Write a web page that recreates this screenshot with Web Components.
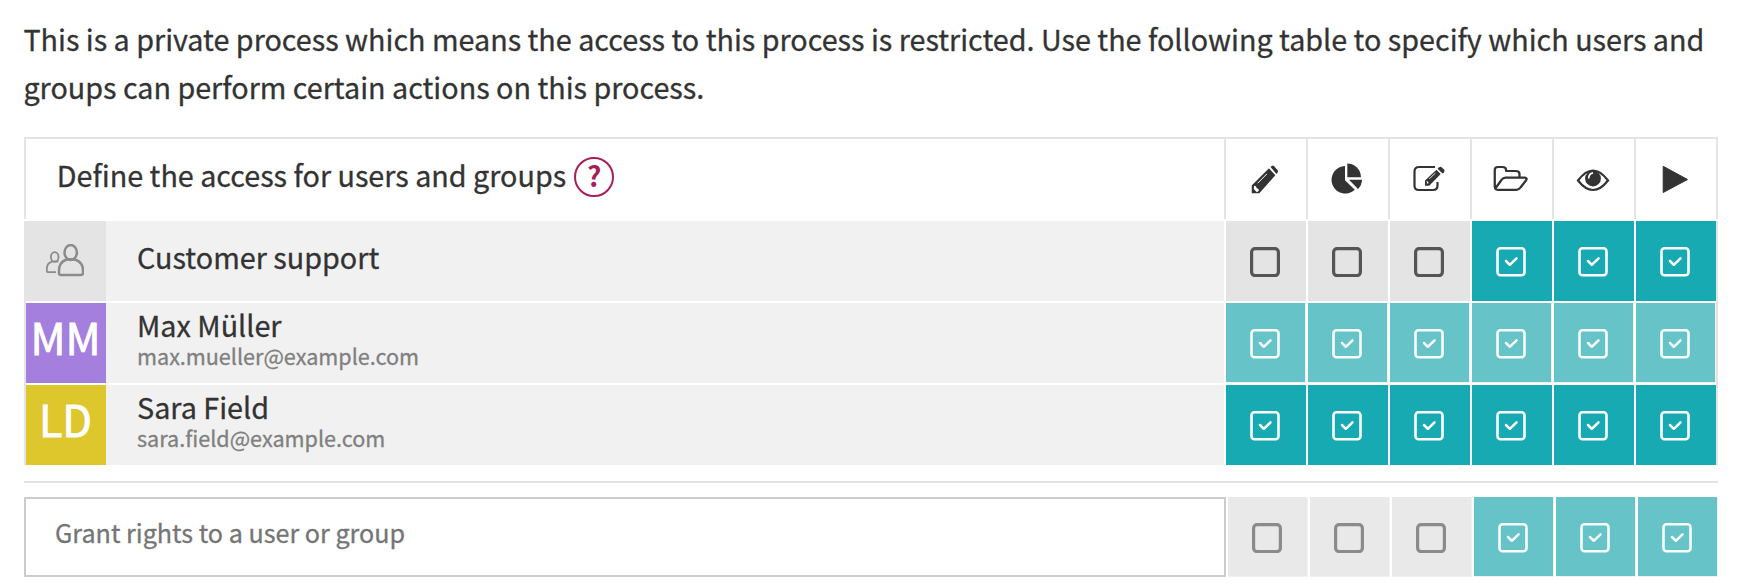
<!DOCTYPE html>
<html lang="en">
<head>
<meta charset="utf-8">
<title>Process access</title>
<style>
body { margin: 0; background: #fff; color: #333; font-family: "Noto Sans CJK SC", "Noto Sans", sans-serif; -webkit-text-stroke: .3px currentColor; }
</style>
</head>
<body>
<access-panel></access-panel>
<script>
const ICONS = {
  pencil: '<g transform="translate(.8 .2) scale(.92 1)"><path fill="#333" d="M1 20.200 20.300 2.600l7.100 6.800L9.300 28H1z"/><path fill="#333" d="M21.400 1.900 22.800.8q1.300-1.100 2.600.2l3.600 3.700q1.300 1.300.1 2.700L27.900 8.800z"/><path d="M20 2.200 27.700 10" stroke="#fff" stroke-width="1.600"/><path d="M7.500 18 17.500 8.700" stroke="#fff" stroke-width="1"/><path fill="#fff" d="m3.500 20.500 2 .5.8 1.800 2 .9.500 1.800-2.300 1.500-3.200-3.200z"/></g>',
  pie: '<g transform="translate(-1 -1)"><path fill="#333" d="M14 2v14.200l9.800 9.600A13.800 13.800 0 1 1 14 2z"/><path fill="#333" d="M16.300-.5A14 14 0 0 1 30 13.200H16.300z"/><path fill="#333" d="M18 15.800H31a13 13 0 0 1-4 9.200z"/></g>',
  edit: '<g transform="translate(-1 0)"><path fill="none" stroke="#333" stroke-width="2.200" d="M22 2H6Q1.500 2 1.500 6.500v14.500q0 4 4.500 4h14q4.500 0 4.500-4.500v-3.500"/><path fill="#333" d="M12 15.500 23.500 4.700l4.200 4.200-11.500 11.800H12z"/><path fill="#333" d="m24.600 3.700 1.400-1.400q1.400-1.200 2.800.1l2.200 2.200q1.200 1.300 0 2.600L29.500 8.600z"/><path d="m16.300 13.800 6-5.600" stroke="#fff" stroke-width=".9"/><path fill="#fff" d="m13.300 16 1.500.6.800 1.500-1 1z"/></g>',
  folder: '<g transform="translate(-3.300 0) scale(1.030 1)"><path fill="none" stroke="#333" stroke-width="2.200" stroke-linejoin="round" d="M2 21V5q0-3 3-3h4.500Q13 2 13 5v1h9.500q3.500 0 3.500 3v3.500M2.500 23.500l6-8.500q1.500-2.300 4-2.300h18.500q3 .3 1.300 2.800l-5.300 7q-1.500 2.300-4 2.300H5q-3 0-3-3.800"/></g>',
  eye: '<g transform="translate(-1 -.5)"><path fill="none" stroke="#333" stroke-width="2.200" d="M1 16Q16-4 31 16 16 35 1 16z"/><circle cx="16" cy="14" r="7.900" fill="#333"/><path fill="none" stroke="#fff" stroke-width="1.600" d="M11.700 14q0-4.800 4.300-5.600"/></g>',
  play: '<path fill="#333" stroke="#333" stroke-linejoin="round" d="M3.200 1.300v26.200L27.500 14.500z"/>'
};

function define(name, html, setup) {
  const tpl = document.createElement('template');
  tpl.innerHTML = html;
  customElements.define(name, class extends HTMLElement {
    constructor() {
      super();
      this.attachShadow({ mode: 'open' }).append(tpl.content.cloneNode(true));
    }
    connectedCallback() { if (setup) setup(this, this.shadowRoot); }
  });
}

define('head-icon', `<style>
  :host { display: flex; box-sizing: border-box; width: 82px; height: 80px; border-right: 2px solid #e4e4e4; padding: 26px 0 0 24px; }
  svg { width: 34px; height: 32px; overflow: visible; }
</style><svg viewBox="0 0 34 32"></svg>`, (el, root) => {
  root.querySelector('svg').innerHTML = ICONS[el.getAttribute('name')];
});

define('right-cell', `<style>
  :host { display: block; box-sizing: border-box; width: 80px; height: 80px; padding: 26px 0 0 24px; background: #e4e4e4; --line: #555; }
  :host([checked]) { background: #18aab2; --line: #fff; }
  :host([muted]) { background: #e9e9e9; --line: #8b8b8b; border: solid #f1f1f1; border-width: 0 1px 1px 0; }
  :host([muted][checked]) { background: #66c3c8; --line: #f9fdfd; }
  svg { display: block; width: 30px; height: 30px; fill: none; stroke: var(--line); stroke-width: 3.200; }
  .tick, .on { display: none; }
  :host([checked]) .tick, :host([checked]) .on { display: inline; }
  :host([checked]) .off { display: none; }
  .on { stroke-width: 2.600; }
  .tick { stroke-width: 2.500; stroke-linecap: round; stroke-linejoin: round; }
</style><svg viewBox="0 0 30 30"><rect class="off" x="1.600" y="1.600" width="26.800" height="27" rx="3.500"/><rect class="on" x="1.500" y="1.300" width="27" height="27" rx="3"/><path class="tick" d="m10 14 3.800 3.800 6.700-6.500"/></svg>`);

define('user-avatar', `<style>
  :host { display: block; width: 80px; height: 80px; text-align: center; color: #fff; font-size: 43.200px; line-height: 66px; white-space: nowrap; text-indent: -1px; -webkit-text-stroke: .8px #fff; }
</style><slot></slot>`);

define('group-avatar', `<style>
  :host { display: block; width: 82px; height: 80px; margin-left: -2px; background: #e4e4e4; box-sizing: border-box; padding: 23px 0 0 22px; }
  svg { display: block; fill: none; stroke: #8b8b8b; }
</style><svg width="38" height="33" viewBox="0 0 38 33"><ellipse cx="24.700" cy="8.500" rx="6.200" ry="7.500" stroke-width="2.500"/><path stroke-width="2.500" d="M20 15.700q-7 2.500-7 11.300v2q0 2 2 2h20q2 0 2-2v-2q0-8.800-7.500-11.300"/><path stroke-width="2.500" d="M19.500 15.900q5-1.500 10.400 0"/><ellipse cx="8.700" cy="13" rx="3.800" ry="4.800" stroke-width="1.800"/><path stroke-width="1.800" d="M6 17.700Q.8 19.200.8 25v2q0 1.200 1.200 1.200h8M6 17.700q3-.6 6.500 0"/></svg>`);

define('access-row', `<style>
  :host { display: flex; height: 80px; }
  .name { width: 1118px; margin-right: 2px; padding: 4px 0 0 31px; box-sizing: border-box; background: #f1f1f1; display: flex; flex-direction: column; }
  :host([group]) .name { padding-top: 18px; }
  .title { font-size: 28.750px; line-height: 36px; }
  .mail { font-size: 21.600px; line-height: 26px; color: #808080; }
  .cells { display: flex; gap: 2px; }
</style><slot name="avatar"></slot><div class="name"><span class="title"><slot></slot></span><span class="mail"><slot name="mail"></slot></span></div><div class="cells"><slot name="rights"></slot></div>`);

define('help-badge', `<style>
  :host { display: flex; align-items: center; justify-content: center; box-sizing: border-box; width: 40px; height: 40px; border: 2px solid #a91e58; border-radius: 50%; color: #a91e58; font-size: 28px; line-height: 36px; font-weight: 700; -webkit-text-stroke: 0; }
  span { position: relative; top: -2px; }
</style><span>?</span>`);

define('access-panel', `<style>
  :host { display: block; padding: 15px 24px 0; }
  p { margin: 0 0 0 -.6px; font-size: 28.730px; line-height: 48px; }
  p span { display: block; white-space: nowrap; }
  .table { margin-top: 26px; width: 1694px; }
  .head { display: flex; box-sizing: border-box; height: 82px; border: solid #e4e4e4; border-width: 2px 0 0 2px; }
  .title { display: flex; align-items: flex-start; width: 1200px; box-sizing: border-box; border-right: 2px solid #e4e4e4; padding: 18px 0 0 31px; font-size: 28.730px; line-height: 40px; gap: 8px; }
  .title b { font-weight: 400; margin: -2px 0 0 -.2px; }
  .body { margin-top: 2px; display: flex; flex-direction: column; gap: 2px; border: solid #e4e4e4; border-width: 0 2px; height: 244px; }
  .rule { height: 2px; margin: 16px 0 14px; background: #e4e4e4; }
  .grant { display: flex; gap: 2px; }
  .field { width: 1202px; height: 80px; box-sizing: border-box; border: 2px solid #ccc; padding: 0 0 10px 29px; display: flex; align-items: center; font-size: 25.150px; color: #757575; }
</style>
<p><span>This is a private process which means the access to this process is restricted. Use the following table to specify which users and</span><span>groups can perform certain actions on this process.</span></p>
<div class="table">
  <div class="head"><div class="title"><b>Define the access for users and groups</b><help-badge></help-badge></div>
    <head-icon name="pencil"></head-icon><head-icon name="pie"></head-icon><head-icon name="edit"></head-icon><head-icon name="folder"></head-icon><head-icon name="eye"></head-icon><head-icon name="play"></head-icon></div>
  <div class="body">
    <access-row group><group-avatar slot="avatar"></group-avatar>Customer support<right-cell slot="rights"></right-cell><right-cell slot="rights"></right-cell><right-cell slot="rights"></right-cell><right-cell slot="rights" checked></right-cell><right-cell slot="rights" checked></right-cell><right-cell slot="rights" checked></right-cell></access-row>
    <access-row><user-avatar slot="avatar" style="background:#a57fdd">MM</user-avatar>Max Müller<span slot="mail">max.mueller@example.com</span><right-cell slot="rights" checked muted></right-cell><right-cell slot="rights" checked muted></right-cell><right-cell slot="rights" checked muted></right-cell><right-cell slot="rights" checked muted></right-cell><right-cell slot="rights" checked muted></right-cell><right-cell slot="rights" checked muted></right-cell></access-row>
    <access-row><user-avatar slot="avatar" style="background:#dec62d">LD</user-avatar>Sara Field<span slot="mail">sara.field@example.com</span><right-cell slot="rights" checked></right-cell><right-cell slot="rights" checked></right-cell><right-cell slot="rights" checked></right-cell><right-cell slot="rights" checked></right-cell><right-cell slot="rights" checked></right-cell><right-cell slot="rights" checked></right-cell></access-row>
  </div>
  <div class="rule"></div>
  <div class="grant"><div class="field">Grant rights to a user or group</div><right-cell muted></right-cell><right-cell muted></right-cell><right-cell muted></right-cell><right-cell checked muted></right-cell><right-cell checked muted></right-cell><right-cell checked muted></right-cell></div>
</div>`);
</script>
</body>
</html>
